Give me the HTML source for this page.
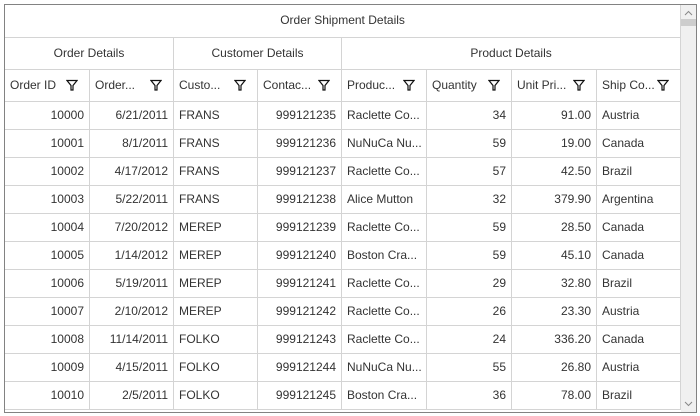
<!DOCTYPE html>
<html><head><style>
body{margin:0;width:700px;height:416px;background:#fff;overflow:hidden;font-family:"Liberation Sans",sans-serif;font-size:12px;color:#333;}
.box{position:absolute;left:4px;top:4px;width:691px;height:407px;border:1px solid #828282;overflow:hidden;}
table{position:absolute;left:0;top:0;border-collapse:separate;border-spacing:0;table-layout:fixed;width:676px;}
td{box-sizing:border-box;border-right:1px solid #d4d4d4;border-bottom:1px solid #d4d4d4;padding:0 5px 2px 5px;white-space:nowrap;overflow:hidden;}
td.r{text-align:right;}
tr.d td{height:28px;}
tr.h td{height:32px;}
td.c{text-align:center;}
.f{display:inline-block;width:12px;height:12px;float:right;margin-top:1px;margin-right:6px;}
.sb{position:absolute;left:676px;top:0;width:15px;height:407px;background:#f0f0f0;}
.th{position:absolute;left:0;top:14px;width:15px;height:7px;background:#cdcdcd;}
</style></head><body>
<div class="box">
<table>
<colgroup><col style="width:85px"><col style="width:84px"><col style="width:84px"><col style="width:84px"><col style="width:85px"><col style="width:85px"><col style="width:85px"><col style="width:84px"></colgroup>
<tr class="h"><td colspan="8" class="c" style="height:33px">Order Shipment Details</td></tr>
<tr class="h"><td colspan="2" class="c">Order Details</td><td colspan="2" class="c">Customer Details</td><td colspan="4" class="c">Product Details</td></tr>
<tr class="h">
<td>Order ID<svg class="f" viewBox="0 0 12 12"><path d="M1 1.5H11L7 6.5V11H5V6.5Z" fill="none" stroke="#111" stroke-width="1.2"/></svg></td>
<td>Order...<svg class="f" viewBox="0 0 12 12"><path d="M1 1.5H11L7 6.5V11H5V6.5Z" fill="none" stroke="#111" stroke-width="1.2"/></svg></td>
<td>Custo...<svg class="f" viewBox="0 0 12 12"><path d="M1 1.5H11L7 6.5V11H5V6.5Z" fill="none" stroke="#111" stroke-width="1.2"/></svg></td>
<td>Contac...<svg class="f" viewBox="0 0 12 12"><path d="M1 1.5H11L7 6.5V11H5V6.5Z" fill="none" stroke="#111" stroke-width="1.2"/></svg></td>
<td>Produc...<svg class="f" viewBox="0 0 12 12"><path d="M1 1.5H11L7 6.5V11H5V6.5Z" fill="none" stroke="#111" stroke-width="1.2"/></svg></td>
<td>Quantity<svg class="f" viewBox="0 0 12 12"><path d="M1 1.5H11L7 6.5V11H5V6.5Z" fill="none" stroke="#111" stroke-width="1.2"/></svg></td>
<td>Unit Pri...<svg class="f" viewBox="0 0 12 12"><path d="M1 1.5H11L7 6.5V11H5V6.5Z" fill="none" stroke="#111" stroke-width="1.2"/></svg></td>
<td>Ship Co...<svg class="f" viewBox="0 0 12 12"><path d="M1 1.5H11L7 6.5V11H5V6.5Z" fill="none" stroke="#111" stroke-width="1.2"/></svg></td>
</tr>
<tr class="d"><td class="r">10000</td><td class="r">6/21/2011</td><td>FRANS</td><td class="r">999121235</td><td>Raclette Co...</td><td class="r">34</td><td class="r">91.00</td><td>Austria</td></tr>
<tr class="d"><td class="r">10001</td><td class="r">8/1/2011</td><td>FRANS</td><td class="r">999121236</td><td>NuNuCa Nu...</td><td class="r">59</td><td class="r">19.00</td><td>Canada</td></tr>
<tr class="d"><td class="r">10002</td><td class="r">4/17/2012</td><td>FRANS</td><td class="r">999121237</td><td>Raclette Co...</td><td class="r">57</td><td class="r">42.50</td><td>Brazil</td></tr>
<tr class="d"><td class="r">10003</td><td class="r">5/22/2011</td><td>FRANS</td><td class="r">999121238</td><td>Alice Mutton</td><td class="r">32</td><td class="r">379.90</td><td>Argentina</td></tr>
<tr class="d"><td class="r">10004</td><td class="r">7/20/2012</td><td>MEREP</td><td class="r">999121239</td><td>Raclette Co...</td><td class="r">59</td><td class="r">28.50</td><td>Canada</td></tr>
<tr class="d"><td class="r">10005</td><td class="r">1/14/2012</td><td>MEREP</td><td class="r">999121240</td><td>Boston Cra...</td><td class="r">59</td><td class="r">45.10</td><td>Canada</td></tr>
<tr class="d"><td class="r">10006</td><td class="r">5/19/2011</td><td>MEREP</td><td class="r">999121241</td><td>Raclette Co...</td><td class="r">29</td><td class="r">32.80</td><td>Brazil</td></tr>
<tr class="d"><td class="r">10007</td><td class="r">2/10/2012</td><td>MEREP</td><td class="r">999121242</td><td>Raclette Co...</td><td class="r">26</td><td class="r">23.30</td><td>Austria</td></tr>
<tr class="d"><td class="r">10008</td><td class="r">11/14/2011</td><td>FOLKO</td><td class="r">999121243</td><td>Raclette Co...</td><td class="r">24</td><td class="r">336.20</td><td>Canada</td></tr>
<tr class="d"><td class="r">10009</td><td class="r">4/15/2011</td><td>FOLKO</td><td class="r">999121244</td><td>NuNuCa Nu...</td><td class="r">55</td><td class="r">26.80</td><td>Austria</td></tr>
<tr class="d"><td class="r">10010</td><td class="r">2/5/2011</td><td>FOLKO</td><td class="r">999121245</td><td>Boston Cra...</td><td class="r">36</td><td class="r">78.00</td><td>Brazil</td></tr>
</table>
<div class="sb"><svg style="position:absolute;left:3px;top:5px" width="9" height="6" viewBox="0 0 9 6"><path d="M1 5L4.5 1.5L8 5" fill="none" stroke="#888"/></svg><div class="th"></div><svg style="position:absolute;left:3px;top:396px" width="9" height="6" viewBox="0 0 9 6"><path d="M1 1L4.5 4.5L8 1" fill="none" stroke="#888"/></svg></div>
</div>
</body></html>
